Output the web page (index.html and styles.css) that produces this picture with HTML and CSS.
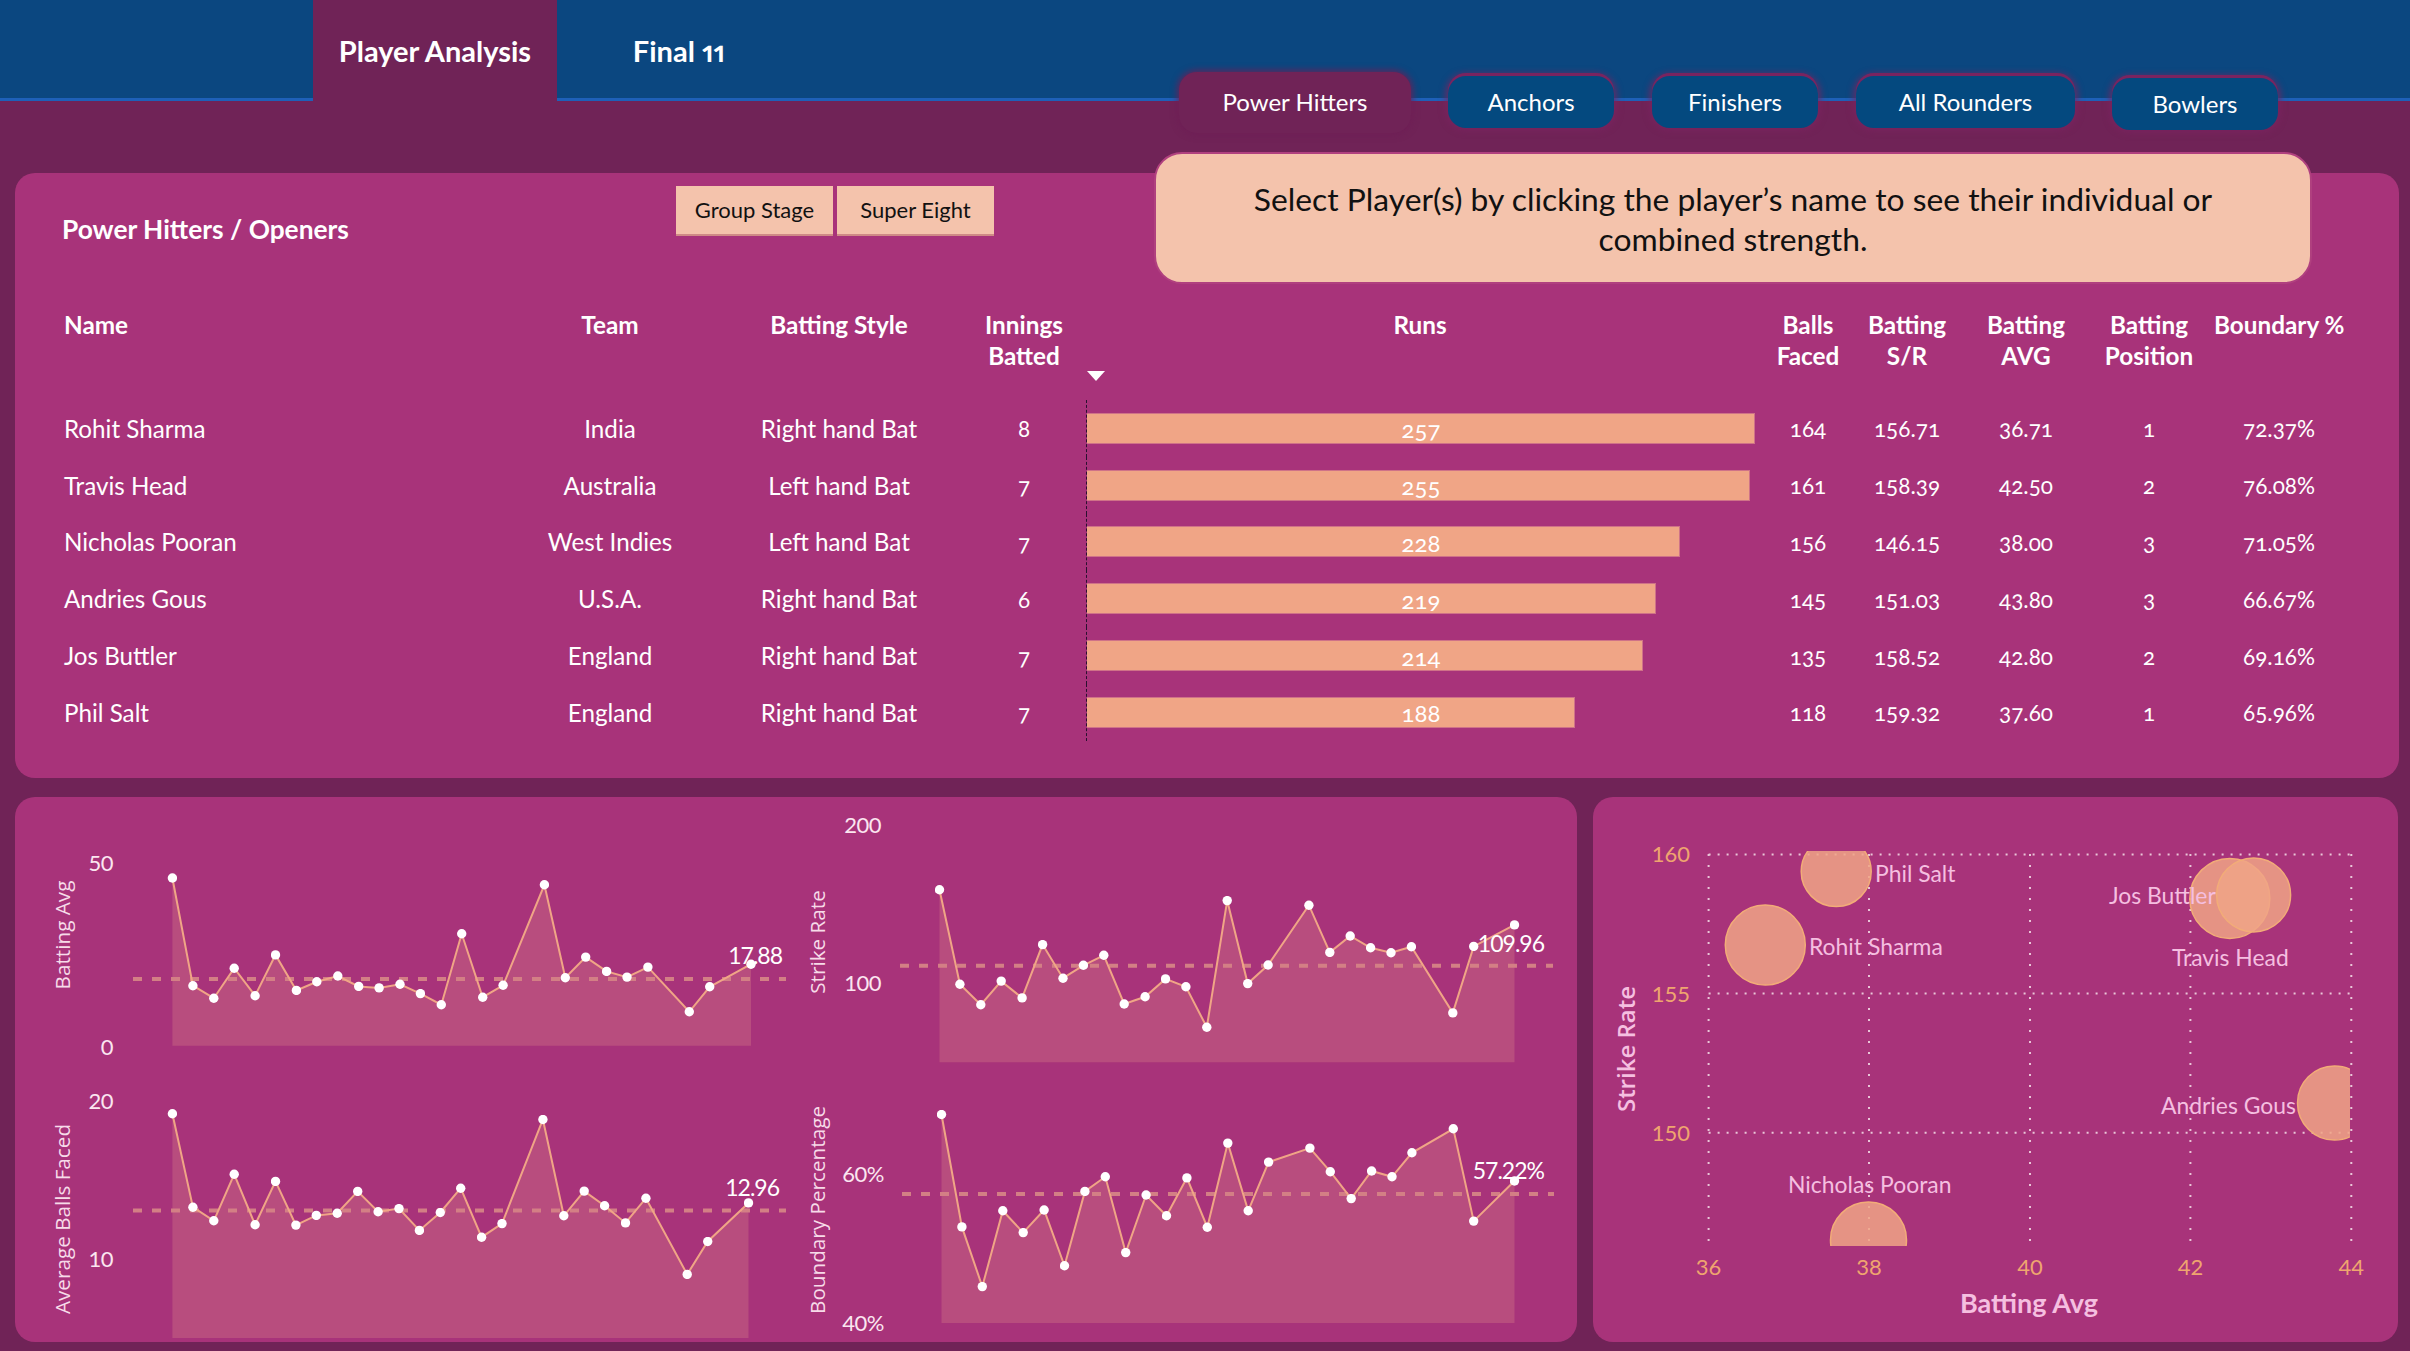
FILE: index.html
```html
<!DOCTYPE html>
<html lang="en">
<head>
    <meta charset="UTF-8">
    <title>Player Analysis</title>
    <link rel="stylesheet" href="styles.css">
</head>
<body>
    <header class="topbar">
        <div class="page-tab active">Player Analysis</div>
        <div class="page-tab">Final 11</div>
    </header>

    <nav class="role-tabs">
        <div class="role-tab current">Power Hitters</div>
        <div class="role-tab anchors">Anchors</div>
        <div class="role-tab finishers">Finishers</div>
        <div class="role-tab rounders">All Rounders</div>
        <div class="role-tab bowlers">Bowlers</div>
    </nav>

    <div class="callout">Select Player(s) by clicking the player’s name to see their individual or combined strength.</div>

    <main class="content">
        <section class="panel table-panel">
            <div class="table-top">
                <h2 class="panel-title">Power Hitters / Openers</h2>
                <div class="stage-btn">Group Stage</div>
                <div class="stage-btn">Super Eight</div>
            </div>

            <div class="row head">
                <div class="left">Name</div>
                <div>Team</div>
                <div>Batting Style</div>
                <div>Innings<br>Batted</div>
                <div class="runs-head">Runs<span class="sort-arrow"></span></div>
                <div>Balls<br>Faced</div>
                <div>Batting<br>S/R</div>
                <div>Batting<br>AVG</div>
                <div>Batting<br>Position</div>
                <div class="no-wrap">Boundary %</div>
            </div>

            <div class="row">
                <div class="left">Rohit Sharma</div><div>India</div><div>Right hand Bat</div><div class="num">8</div>
                <div class="runs"><div class="bar" style="width:668px"></div><div class="bar-label">257</div></div>
                <div class="num">164</div><div class="num">156.71</div><div class="num">36.71</div><div class="num">1</div><div class="num">72.37%</div>
            </div>
            <div class="row">
                <div class="left">Travis Head</div><div>Australia</div><div>Left hand Bat</div><div class="num">7</div>
                <div class="runs"><div class="bar" style="width:663px"></div><div class="bar-label">255</div></div>
                <div class="num">161</div><div class="num">158.39</div><div class="num">42.50</div><div class="num">2</div><div class="num">76.08%</div>
            </div>
            <div class="row">
                <div class="left">Nicholas Pooran</div><div>West Indies</div><div>Left hand Bat</div><div class="num">7</div>
                <div class="runs"><div class="bar" style="width:593px"></div><div class="bar-label">228</div></div>
                <div class="num">156</div><div class="num">146.15</div><div class="num">38.00</div><div class="num">3</div><div class="num">71.05%</div>
            </div>
            <div class="row">
                <div class="left">Andries Gous</div><div>U.S.A.</div><div>Right hand Bat</div><div class="num">6</div>
                <div class="runs"><div class="bar" style="width:569px"></div><div class="bar-label">219</div></div>
                <div class="num">145</div><div class="num">151.03</div><div class="num">43.80</div><div class="num">3</div><div class="num">66.67%</div>
            </div>
            <div class="row">
                <div class="left">Jos Buttler</div><div>England</div><div>Right hand Bat</div><div class="num">7</div>
                <div class="runs"><div class="bar" style="width:556px"></div><div class="bar-label">214</div></div>
                <div class="num">135</div><div class="num">158.52</div><div class="num">42.80</div><div class="num">2</div><div class="num">69.16%</div>
            </div>
            <div class="row">
                <div class="left">Phil Salt</div><div>England</div><div>Right hand Bat</div><div class="num">7</div>
                <div class="runs"><div class="bar" style="width:488px"></div><div class="bar-label">188</div></div>
                <div class="num">118</div><div class="num">159.32</div><div class="num">37.60</div><div class="num">1</div><div class="num">65.96%</div>
            </div>
        </section>

        <div class="lower">
            <section class="panel trends">
                <svg class="trend" viewBox="15 797 781 273">
                    <defs>
                        <marker id="dot" markerUnits="userSpaceOnUse" markerWidth="10" markerHeight="10" refX="5" refY="5">
                            <circle cx="5" cy="5" r="4.7" fill="#fff"/>
                        </marker>
                    </defs>
                    <polygon class="area" points="172.4,1045.8 172.4,878 192.9,985.7 213.8,998.2 234.2,968.2 255.1,995.7 275.5,954.9 296.4,990.4 316.8,981.8 337.8,976 358.7,986.4 379.1,987.9 400,984.3 420.4,993.6 441.3,1004.7 461.7,933.8 482.7,997.2 503.1,985.3 544.4,884.8 565.3,977.8 585.7,957.1 606.6,971.4 627,977.1 647.9,967.1 689.3,1011.8 709.7,986.8 751,964.2 751,1045.8"/>
                    <line class="avg" x1="133" y1="979" x2="786" y2="979"/>
                    <polyline class="line" marker-start="url(#dot)" marker-mid="url(#dot)" marker-end="url(#dot)" points="172.4,878 192.9,985.7 213.8,998.2 234.2,968.2 255.1,995.7 275.5,954.9 296.4,990.4 316.8,981.8 337.8,976 358.7,986.4 379.1,987.9 400,984.3 420.4,993.6 441.3,1004.7 461.7,933.8 482.7,997.2 503.1,985.3 544.4,884.8 565.3,977.8 585.7,957.1 606.6,971.4 627,977.1 647.9,967.1 689.3,1011.8 709.7,986.8 751,964.2"/>
                    <text class="tick" x="113" y="862.5">50</text>
                    <text class="tick" x="113" y="1046.5">0</text>
                    <text class="axis-name" transform="translate(62 935) rotate(-90)">Batting Avg</text>
                    <text class="value" x="782" y="955">17.88</text>
                </svg>
                <svg class="trend" viewBox="796 797 781 273">
                    <polygon class="area" points="939.5,1062.3 939.5,889.8 959.9,984.3 980.8,1004.7 1001.2,981.1 1022.1,997.9 1042.6,944.6 1063,978.2 1083.4,965.3 1103.8,955.3 1124.2,1004 1145.1,996.8 1165.5,978.9 1185.9,986.8 1206.8,1027.2 1227.2,900.6 1247.7,983.6 1268.1,965 1308.9,905.2 1329.8,952.4 1350.2,936 1370.6,947.8 1391,952.8 1411.4,946.7 1452.8,1012.9 1473.7,946.4 1514.5,924.9 1514.5,1062.3"/>
                    <line class="avg" x1="900" y1="965.7" x2="1553" y2="965.7"/>
                    <polyline class="line" marker-start="url(#dot)" marker-mid="url(#dot)" marker-end="url(#dot)" points="939.5,889.8 959.9,984.3 980.8,1004.7 1001.2,981.1 1022.1,997.9 1042.6,944.6 1063,978.2 1083.4,965.3 1103.8,955.3 1124.2,1004 1145.1,996.8 1165.5,978.9 1185.9,986.8 1206.8,1027.2 1227.2,900.6 1247.7,983.6 1268.1,965 1308.9,905.2 1329.8,952.4 1350.2,936 1370.6,947.8 1391,952.8 1411.4,946.7 1452.8,1012.9 1473.7,946.4 1514.5,924.9"/>
                    <text class="tick" x="881" y="824.5">200</text>
                    <text class="tick" x="881" y="982.5">100</text>
                    <text class="axis-name" transform="translate(817 942) rotate(-90)">Strike Rate</text>
                    <text class="value" x="1544" y="943">109.96</text>
                </svg>
                <svg class="trend" viewBox="15 1070 781 272">
                    <polygon class="area" points="172.4,1338.1 172.4,1113.8 192.9,1207.2 213.8,1220.8 234.2,1174.3 255.1,1224.7 275.5,1181.4 295.9,1225.1 316.3,1215.4 337.2,1213.3 357.7,1191.4 378.1,1211.8 399,1208.6 419.4,1230.4 440.3,1212.5 460.7,1188.2 481.6,1237.2 502,1223.6 542.9,1119.5 563.8,1215.8 584.2,1191.1 604.6,1205.8 625.5,1222.9 645.9,1198.2 687.2,1274.4 707.7,1241.5 748.5,1202.9 748.5,1338.1"/>
                    <line class="avg" x1="133" y1="1210.4" x2="786" y2="1210.4"/>
                    <polyline class="line" marker-start="url(#dot)" marker-mid="url(#dot)" marker-end="url(#dot)" points="172.4,1113.8 192.9,1207.2 213.8,1220.8 234.2,1174.3 255.1,1224.7 275.5,1181.4 295.9,1225.1 316.3,1215.4 337.2,1213.3 357.7,1191.4 378.1,1211.8 399,1208.6 419.4,1230.4 440.3,1212.5 460.7,1188.2 481.6,1237.2 502,1223.6 542.9,1119.5 563.8,1215.8 584.2,1191.1 604.6,1205.8 625.5,1222.9 645.9,1198.2 687.2,1274.4 707.7,1241.5 748.5,1202.9"/>
                    <text class="tick" x="113" y="1100.5">20</text>
                    <text class="tick" x="113" y="1258.5">10</text>
                    <text class="axis-name" transform="translate(62 1219) rotate(-90)">Average Balls Faced</text>
                    <text class="value" x="779" y="1187">12.96</text>
                </svg>
                <svg class="trend" viewBox="796 1070 781 272">
                    <polygon class="area" points="941.5,1323.1 941.5,1114.5 961.9,1226.9 982.3,1286.6 1002.8,1210.8 1023.2,1232.6 1044.1,1210 1064.5,1265.8 1084.9,1191.4 1105.3,1176.8 1125.7,1252.6 1146.1,1195 1166.5,1215.8 1186.9,1177.9 1207.3,1227.2 1227.8,1143.1 1248.2,1210.8 1268.6,1162.1 1309.9,1148.1 1330.3,1171.7 1351.2,1198.6 1371.6,1171 1392,1176.8 1411.9,1152.8 1453.3,1128.8 1473.7,1221.1 1514.5,1181 1514.5,1323.1"/>
                    <line class="avg" x1="902" y1="1193.9" x2="1554" y2="1193.9"/>
                    <polyline class="line" marker-start="url(#dot)" marker-mid="url(#dot)" marker-end="url(#dot)" points="941.5,1114.5 961.9,1226.9 982.3,1286.6 1002.8,1210.8 1023.2,1232.6 1044.1,1210 1064.5,1265.8 1084.9,1191.4 1105.3,1176.8 1125.7,1252.6 1146.1,1195 1166.5,1215.8 1186.9,1177.9 1207.3,1227.2 1227.8,1143.1 1248.2,1210.8 1268.6,1162.1 1309.9,1148.1 1330.3,1171.7 1351.2,1198.6 1371.6,1171 1392,1176.8 1411.9,1152.8 1453.3,1128.8 1473.7,1221.1 1514.5,1181"/>
                    <text class="tick" x="884" y="1173.5">60%</text>
                    <text class="tick" x="884" y="1322.5">40%</text>
                    <text class="axis-name" transform="translate(817 1210) rotate(-90)">Boundary Percentage</text>
                    <text class="value" x="1544" y="1170">57.22%</text>
                </svg>
            </section>

            <section class="panel scatter-panel">
                <svg class="scatter" viewBox="1593 797 805 545">
                    <defs>
                        <clipPath id="plot"><rect x="1690" y="851" width="660" height="395"/></clipPath>
                    </defs>
                    <path class="grid-x" d="M1708.6 854V1247M1869 854V1247M2030 854V1247M2190.4 854V1247M2351.3 854V1247"/>
                    <path class="grid-y" d="M1708.6 854.4H2351M1708.6 993.6H2351M1708.6 1132.8H2351"/>
                    <g clip-path="url(#plot)">
                        <circle class="bubble" cx="1836.2" cy="871.6" r="35"/>
                        <circle class="bubble" cx="1765.3" cy="945" r="40"/>
                        <circle class="bubble" cx="2229.8" cy="898.4" r="40"/>
                        <circle class="bubble" cx="2253.6" cy="894.9" r="37"/>
                        <circle class="bubble" cx="2334.5" cy="1103" r="37"/>
                        <circle class="bubble" cx="1868.5" cy="1240" r="38"/>
                    </g>
                    <text class="name" x="1875" y="873">Phil Salt</text>
                    <text class="name" x="1809" y="946">Rohit Sharma</text>
                    <text class="name" x="2109" y="895">Jos Buttler</text>
                    <text class="name" x="2172" y="957">Travis Head</text>
                    <text class="name" x="2161" y="1105">Andries Gous</text>
                    <text class="name" x="1788" y="1184">Nicholas Pooran</text>
                    <text class="s-tick end" x="1690" y="853">160</text>
                    <text class="s-tick end" x="1690" y="993">155</text>
                    <text class="s-tick end" x="1690" y="1132">150</text>
                    <text class="s-tick" x="1708.6" y="1266">36</text>
                    <text class="s-tick" x="1869" y="1266">38</text>
                    <text class="s-tick" x="2030" y="1266">40</text>
                    <text class="s-tick" x="2190.4" y="1266">42</text>
                    <text class="s-tick" x="2351.3" y="1266">44</text>
                    <text class="s-title" x="2029" y="1302">Batting Avg</text>
                    <text class="s-axis" transform="translate(1625 1049) rotate(-90)">Strike Rate</text>
                </svg>
            </section>
        </div>
    </main>
</body>
</html>
```

FILE: styles.css
```css
* {
    box-sizing: border-box;
}
body {
    background-color: #702357;
    color: #fff;
    font-family: Lato, "Open Sans", sans-serif;
    font-variant-numeric: oldstyle-nums;
    margin: 0;
    width: 2410px;
    height: 1351px;
    overflow: hidden;
    position: relative;
}

/* top bar */
.topbar {
    background-color: #0b4780;
    border-bottom: 3px solid #1e60b8;
    height: 101px;
    display: flex;
    padding-left: 313px;
}
.page-tab {
    width: 244px;
    height: 101px;
    padding-top: 33px;
    font-size: 29px;
    font-variant-numeric: oldstyle-nums proportional-nums;
    font-weight: 700;
    line-height: 36px;
    text-align: center;
}
.page-tab.active {
    background-color: #702357;
}

/* role tabs sit across the bar edge */
.role-tabs {
    position: absolute;
    left: 1179px;
    top: 72px;
    display: flex;
    align-items: flex-start;
}
.role-tab {
    background-color: #04497f;
    border-radius: 18px;
    box-shadow: 0 -3px 0 #7a2460, 0 0 6px 3px rgba(122, 36, 96, 0.7);
    font-size: 24px;
    height: 52px;
    line-height: 52px;
    margin-top: 4px;
    text-align: center;
}
.role-tab.current {
    background-color: #702357;
    height: 61px;
    margin-top: 0;
    width: 232px;
    line-height: 60px;
    box-shadow: 0 0 6px 2px rgba(110, 30, 85, 0.8);
}
.anchors {
    margin-left: 37px;
    width: 166px;
}
.finishers {
    margin-left: 38px;
    width: 166px;
}
.rounders {
    margin-left: 38px;
    width: 219px;
}
.role-tab.bowlers {
    margin-left: 37px;
    margin-top: 6px;
    width: 166px;
}

.callout {
    position: absolute;
    left: 1154px;
    top: 152px;
    width: 1158px;
    height: 132px;
    padding: 25px 80px 0;
    background-color: #f4c3ac;
    border: 2px solid #b0407f;
    border-radius: 28px;
    color: #111;
    font-size: 31.8px;
    line-height: 40px;
    text-align: center;
}

/* panels */
.content {
    padding: 72px 11px 0 15px;
}
.panel {
    background-color: #a8337a;
    border-radius: 20px;
}
.table-panel {
    height: 605px;
    padding: 13px 0 0 49px;
}
.table-top {
    display: flex;
    align-items: flex-start;
    gap: 4px;
    height: 123px;
}
.panel-title {
    width: 610px;
    margin: 25px 0 0 -2px;
    font-size: 26.3px;
    font-weight: 700;
    line-height: 36px;
}
.stage-btn {
    width: 157px;
    height: 50px;
    background-color: #f4c3ac;
    border-bottom: 2px solid #cf8a86;
    color: #111;
    font-size: 22px;
    line-height: 48px;
    text-align: center;
}

/* table */
.row {
    display: grid;
    grid-template-columns: 456px 180px 278px 92px 700px 76px 122px 116px 130px 130px;
    height: 56.8px;
    align-items: center;
    font-size: 24.2px;
    text-align: center;
}
.row.head {
    height: 91px;
    align-items: start;
    font-size: 24.3px;
    font-weight: 700;
    line-height: 31px;
}
.left {
    text-align: left;
}
.no-wrap {
    white-space: nowrap;
}
.num {
    padding-top: 1px;
    font-size: 22.5px;
}
.runs-head {
    position: relative;
}
.sort-arrow {
    position: absolute;
    left: 17px;
    top: 62px;
    border-left: 9px solid transparent;
    border-right: 9px solid transparent;
    border-top: 10px solid #fff;
}
.runs {
    display: grid;
    height: 100%;
    margin-left: 16px;
    border-left: 1px dashed #2a1030;
    align-items: center;
}
.bar, .bar-label {
    grid-area: 1 / 1;
}
.bar {
    height: 31px;
    background-color: #f0a586;
    border: 1px solid #cf7288;
    border-left: 0;
}
.bar-label {
    padding-top: 1px;
    padding-right: 15px;
    font-size: 24px;
}

/* lower panels */
.lower {
    display: flex;
    gap: 16px;
    margin-top: 19px;
}
.trends {
    width: 1562px;
    height: 545px;
    display: grid;
    grid-template-columns: 781px 781px;
    grid-template-rows: 273px 272px;
}
.scatter-panel {
    width: 805px;
    height: 545px;
}
.trend, .scatter {
    display: block;
    width: 100%;
    height: 100%;
    overflow: visible;
    font-variant-numeric: lining-nums;
}
.area {
    fill: #b84d7e;
}
.avg {
    stroke: #d37f85;
    stroke-width: 4;
    stroke-dasharray: 9 10;
}
.line {
    fill: none;
    stroke: #f0a586;
    stroke-width: 2;
}
.tick {
    fill: #fbe6f0;
    font-size: 22px;
    letter-spacing: -0.5px;
    text-anchor: end;
    dominant-baseline: central;
}
.value {
    fill: #fff;
    font-size: 23px;
    letter-spacing: -1px;
    text-anchor: end;
    dominant-baseline: central;
}
.axis-name {
    fill: #f7dbe9;
    font-family: "Open Sans", sans-serif;
    font-size: 20.7px;
    text-anchor: middle;
    dominant-baseline: central;
}

/* scatter */
.grid-x, .grid-y {
    fill: none;
    stroke: #e9c6d8;
    stroke-width: 2;
}
.grid-x {
    stroke-dasharray: 2 9;
}
.grid-y {
    stroke-dasharray: 2 7;
}
.bubble {
    fill: #f0a586;
    fill-opacity: 0.85;
    stroke: #f2ac78;
    stroke-width: 1.5;
}
.name {
    fill: #f5bfe0;
    font-size: 22.9px;
    dominant-baseline: central;
}
.s-tick {
    fill: #efa56f;
    font-size: 22px;
    text-anchor: middle;
    dominant-baseline: central;
}
.s-tick.end {
    text-anchor: end;
}
.s-title {
    fill: #f5bfe0;
    font-size: 27px;
    font-weight: 700;
    text-anchor: middle;
    dominant-baseline: central;
}
.s-axis {
    fill: #f5bfe0;
    font-family: "Open Sans", sans-serif;
    font-size: 24px;
    font-weight: 600;
    text-anchor: middle;
    dominant-baseline: central;
}
```
